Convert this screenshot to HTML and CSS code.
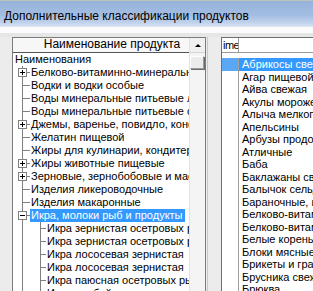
FILE: index.html
```html
<!DOCTYPE html>
<html>
<head>
    <title>Дополнительные классификации продуктов</title>
    <link rel="stylesheet" href="styles.css">
</head>
<body>
    <div class="caption">Дополнительные классификации продуктов</div>
    <div class="strip"></div>
    <div class="main">
        <div class="left-pane">
            <div class="tree-box">
                <div class="tree">
                    <div class="tree-head">Наименование продукта</div>
                    <div class="row"><span class="lbl root">Наименования</span></div>
                    <div class="row"><span class="tw"><span class="box plus"></span></span><span class="lbl">Белково-витаминно-минеральные добавки</span></div>
                    <div class="row"><span class="tw"></span><span class="lbl">Водки и водки особые</span></div>
                    <div class="row"><span class="tw"></span><span class="lbl">Воды минеральные питьевые лечебные</span></div>
                    <div class="row"><span class="tw"></span><span class="lbl">Воды минеральные питьевые столовые</span></div>
                    <div class="row"><span class="tw"><span class="box plus"></span></span><span class="lbl">Джемы, варенье, повидло, конфитюры</span></div>
                    <div class="row"><span class="tw"></span><span class="lbl">Желатин пищевой</span></div>
                    <div class="row"><span class="tw"></span><span class="lbl">Жиры для кулинарии, кондитерской</span></div>
                    <div class="row"><span class="tw"><span class="box plus"></span></span><span class="lbl">Жиры животные пищевые</span></div>
                    <div class="row"><span class="tw"><span class="box plus"></span></span><span class="lbl">Зерновые, зернобобовые и масличные</span></div>
                    <div class="row"><span class="tw"></span><span class="lbl">Изделия ликероводочные</span></div>
                    <div class="row"><span class="tw"></span><span class="lbl">Изделия макаронные</span></div>
                    <div class="row"><span class="tw"><span class="box"></span></span><span class="lbl sel">Икра, молоки рыб и продукты</span></div>
                    <div class="row"><span class="tw pass"></span><span class="tw sub"></span><span class="lbl">Икра зернистая осетровых рыб</span></div>
                    <div class="row"><span class="tw pass"></span><span class="tw sub"></span><span class="lbl">Икра зернистая осетровых рыб</span></div>
                    <div class="row"><span class="tw pass"></span><span class="tw sub"></span><span class="lbl">Икра лососевая зернистая</span></div>
                    <div class="row"><span class="tw pass"></span><span class="tw sub"></span><span class="lbl">Икра лососевая зернистая</span></div>
                    <div class="row"><span class="tw pass"></span><span class="tw sub"></span><span class="lbl">Икра паюсная осетровых рыб</span></div>
                    <div class="row"><span class="tw pass"></span><span class="tw sub"></span><span class="lbl">Икра пробойная</span></div>
                </div>
                <div class="vscroll">
                    <div class="sb-btn"><span class="arrow"></span></div>
                    <div class="sb-thumb"></div>
                </div>
            </div>
        </div>
        <div class="splitter"></div>
        <div class="right-pane">
            <div class="grid-head">
                <span class="gh-ind">ime</span>
                <span class="gh-name"></span>
            </div>
            <div class="grid">
                <div class="grow on"><span class="ind"></span><span class="name">Абрикосы свежие</span></div>
                <div class="grow"><span class="ind"></span><span class="name">Агар пищевой</span></div>
                <div class="grow"><span class="ind"></span><span class="name">Айва свежая</span></div>
                <div class="grow"><span class="ind"></span><span class="name">Акулы мороженые</span></div>
                <div class="grow"><span class="ind"></span><span class="name">Алыча мелкоплодная</span></div>
                <div class="grow"><span class="ind"></span><span class="name">Апельсины</span></div>
                <div class="grow"><span class="ind"></span><span class="name">Арбузы продовольственные</span></div>
                <div class="grow"><span class="ind"></span><span class="name">Атличные</span></div>
                <div class="grow"><span class="ind"></span><span class="name">Баба</span></div>
                <div class="grow"><span class="ind"></span><span class="name">Баклажаны свежие</span></div>
                <div class="grow"><span class="ind"></span><span class="name">Балычок сельдевой</span></div>
                <div class="grow"><span class="ind"></span><span class="name">Бараночные, изделия</span></div>
                <div class="grow"><span class="ind"></span><span class="name">Белково-витаминные</span></div>
                <div class="grow"><span class="ind"></span><span class="name">Белково-витаминные</span></div>
                <div class="grow"><span class="ind"></span><span class="name">Белые коренья</span></div>
                <div class="grow"><span class="ind"></span><span class="name">Блоки мясные</span></div>
                <div class="grow"><span class="ind"></span><span class="name">Брикеты и гранулы</span></div>
                <div class="grow"><span class="ind"></span><span class="name">Брусника свежая</span></div>
                <div class="grow"><span class="ind"></span><span class="name">Брюква</span></div>
            </div>
        </div>
    </div>
</body>
</html>
```

FILE: styles.css
```css
* { margin: 0; padding: 0; box-sizing: border-box; }
html, body { width: 313px; height: 291px; overflow: hidden; }
body { background: #ececec; font-family: "Liberation Sans", Arial, sans-serif; font-size: 11px; color: #000; }

.caption { height: 27px; padding: 8px 0 0 4px; font-size: 12px; line-height: 14px; white-space: nowrap;
    border-top: 1px solid #b9c3b9;
    background: linear-gradient(#97b3db 0%, #a3bde2 55%, #c2d3ec 85%, #dde6f2 100%); }
.strip { height: 10px; background: linear-gradient(#fbfbfb 0, #fbfbfb 6px, #e6e6e6 6px); }

.main { display: flex; height: 254px; }
.left-pane { width: 206px; flex: none; padding-left: 12px; }
.tree-box { display: flex; height: 100%; border: 1px solid #7c7c7c; border-bottom: 0; background: #fff; }
.tree { width: 176px; flex: none; overflow: hidden; }
.tree-head { height: 15px; line-height: 13px; text-align: center; white-space: nowrap; font-size: 12px; padding-left: 22px;
    background: #f7f7f7; border-bottom: 1px solid #555; }

.row { display: flex; height: 13px; white-space: nowrap; }
.lbl { line-height: 13px; padding: 0 2px 0 1px; }
.lbl.root { padding-left: 2px; }
.sel { background: #3399ff; color: #fff; }

.tw { width: 17px; flex: none; display: flex; align-items: center;
    background: linear-gradient(#808080, #808080) 9px 0 / 1px 100% no-repeat,
                linear-gradient(#808080, #808080) 9px 6px / 8px 1px no-repeat; }
.tw.pass { background: linear-gradient(#808080, #808080) 9px 0 / 1px 100% no-repeat; }
.tw.sub { width: 16px;
    background: linear-gradient(#808080, #808080) 10px 0 / 1px 100% no-repeat,
                linear-gradient(#808080, #808080) 10px 6px / 6px 1px no-repeat; }
.box { width: 9px; height: 9px; margin-left: 5px; border: 1px solid #808080;
    background: linear-gradient(#000, #000) 1px 3px / 5px 1px no-repeat, #fff; }
.box.plus { background: linear-gradient(#000, #000) 1px 3px / 5px 1px no-repeat,
                        linear-gradient(#000, #000) 3px 1px / 1px 5px no-repeat, #fff; }

.vscroll { width: 16px; flex: none; background: #f4f4f4; border-left: 1px solid #e2e2e2; }
.sb-btn { height: 15px; display: flex; align-items: center; justify-content: center; background: #f0f0f0; border-bottom: 1px solid #d6d6d6; }
.arrow { width: 0; height: 0; border-left: 3px solid transparent; border-right: 3px solid transparent; border-bottom: 3px solid #000; }
.sb-thumb { height: 13px; margin: 3px 1px 0 0; background: #ececec; border: 1px solid #9a9a9a; border-top-color: #fff; border-left-color: #fff;
    box-shadow: 1px 1px 0 #6a6a6a; }

.splitter { width: 15px; flex: none; background: linear-gradient(90deg, #ececec 0, #ececec 1px, #c8c8c8 1px, #c8c8c8 2px, #ececec 2px); }

.right-pane { flex: 1; min-width: 0; background: #fff; border: 1px solid #6f6f6f; border-right: 0; border-bottom: 0; overflow: hidden; }
.grid-head { display: flex; height: 15px; border-bottom: 1px solid #9a9a9a; }
.gh-ind { width: 17px; flex: none; padding-left: 1px; line-height: 14px; letter-spacing: -0.5px; overflow: hidden; border-right: 1px solid #9a9a9a; }
.gh-name { flex: 1; }
.grid { padding-top: 5px; }
.grow { display: flex; height: 12.5px; white-space: nowrap; }
.ind { width: 17px; flex: none; border-right: 1px solid #a0a0a0; }
.name { flex: 1; line-height: 12.5px; padding-left: 3px; }
.grow.on .ind { background: #5aa8f5; }
.grow.on .name { background: #3399ff; color: #fff; }
```
